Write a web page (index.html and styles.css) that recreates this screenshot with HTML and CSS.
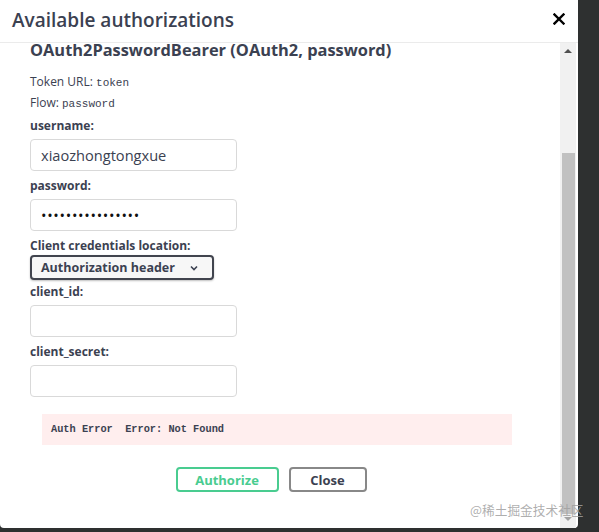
FILE: index.html
```html
<!DOCTYPE html>
<html lang="en">
<head>
    <meta charset="UTF-8">
    <meta name="viewport" content="width=device-width, initial-scale=1.0">
    <title>Available authorizations</title>
    <link rel="stylesheet" href="styles.css">
</head>
<body>
    <div class="modal">
        <div class="modal-header">
            <h3>Available authorizations</h3>
            <button class="close-x" aria-label="Close">
                <svg width="12" height="12" viewBox="0 0 12 12"><path d="M1.5 1.5 L10.5 10.5 M10.5 1.5 L1.5 10.5" stroke="#000" stroke-width="2.4" stroke-linecap="square"/></svg>
            </button>
        </div>
        <div class="modal-body">
            <div class="auth-content">
                <h4>OAuth2PasswordBearer (OAuth2, password)</h4>
                <p class="flow-info">Token URL: <code>token</code></p>
                <p class="flow-info">Flow: <code>password</code></p>

                <label for="username" class="first-label">username:</label>
                <input type="text" id="username" value="xiaozhongtongxue">

                <label for="password">password:</label>
                <input type="password" id="password" value="xiaozhongtongxue">

                <label class="loc-label">Client credentials location:</label>
                <div class="select-box">
                    <span>Authorization header</span>
                    <svg width="8" height="6" viewBox="0 0 8 6"><path d="M1 1.5 L4 4.5 L7 1.5" fill="none" stroke="#3b4151" stroke-width="1.6"/></svg>
                </div>

                <label for="client_id">client_id:</label>
                <input type="text" id="client_id">

                <label for="client_secret">client_secret:</label>
                <input type="text" id="client_secret">

                <div class="errors">Auth Error&nbsp; Error: Not Found</div>

                <div class="btn-row">
                    <button class="btn authorize">Authorize</button>
                    <button class="btn btn-close">Close</button>
                </div>
            </div>
            <!-- fake scrollbar, content is scrolled a bit -->
            <div class="scrollbar">
                <span class="arrow up"></span>
                <div class="thumb"></div>
                <span class="arrow down"></span>
            </div>
        </div>
    </div>
    <div class="watermark">@稀土掘金技术社区</div>
</body>
</html>
```

FILE: styles.css
```css
body {
    margin: 0;
    height: 532px;
    overflow: hidden;
    background-color: #2e3030;
    font-family: "Open Sans", sans-serif;
    color: #3b4151;
}
.modal {
    width: 578px;
    height: 528px;
    background-color: white;
    border-radius: 0 0 4px 4px;
    display: flex;
    flex-direction: column;
}
.modal-header {
    height: 42px;
    border-bottom: 1px solid #ebebeb;
    display: flex;
    align-items: center;
    justify-content: space-between;
    padding: 0 13px 0 12px;
    flex-shrink: 0;
}
.modal-header h3 {
    margin: 0;
    font-size: 19px;
    font-weight: 600;
    color: #3b4151;
    position: relative;
    top: -1px;
}
.close-x {
    border: none;
    background: none;
    padding: 0;
    width: 12px;
    height: 12px;
    display: flex;
    position: relative;
    top: -2px;
}
.modal-body {
    flex: 1;
    display: flex;
    min-height: 0;
}
.auth-content {
    width: 482px;
    padding-left: 30px;
    flex-shrink: 0;
}
.auth-content h4 {
    margin: -3px 0 0;
    font-size: 16.4px;
    line-height: 20px;
    font-weight: 700;
}
.flow-info {
    margin: 0;
    height: 21px;
    font-size: 12px;
    line-height: 21px;
}
.flow-info:first-of-type {
    margin-top: 11px;
}
.flow-info code {
    font-family: "Liberation Mono", monospace;
    font-size: 11px;
    line-height: 1;
}
label {
    display: block;
    font-size: 12px;
    font-weight: 700;
    line-height: 16px;
    margin-bottom: 5px;
}
.first-label {
    margin-top: 5px;
}
input {
    display: block;
    box-sizing: border-box;
    width: 207px;
    height: 32px;
    margin: 0 0 7px;
    padding: 0 10px;
    border: 1px solid #d9d9d9;
    border-radius: 4px;
    font-family: "Open Sans", sans-serif;
    font-size: 14.6px;
    color: #3b4151;
}
input[type="password"] {
    letter-spacing: 0.7px;
    color: #111;
}
.loc-label {
    margin-bottom: 1px;
}
.select-box {
    box-sizing: border-box;
    width: 184px;
    height: 25px;
    border: 2px solid #41444e;
    border-radius: 4px;
    background-color: #f7f7f7;
    box-shadow: 0 1px 2px rgba(0, 0, 0, 0.25);
    display: flex;
    align-items: center;
    justify-content: space-between;
    padding: 0 14px 0 9px;
    font-size: 12.5px;
    font-weight: 700;
    margin-bottom: 4px;
}
.errors {
    margin: 17px 0 0 12px;
    width: 470px;
    height: 31px;
    box-sizing: border-box;
    padding-left: 9px;
    background-color: #ffeeee;
    font-family: "Liberation Mono", monospace;
    font-size: 10.3px;
    font-weight: 700;
    line-height: 31px;
    color: #3b4151;
}
.btn-row {
    display: flex;
    justify-content: center;
    gap: 10px;
    margin-top: 22px;
}
.btn {
    box-sizing: border-box;
    height: 25px;
    border: 2px solid #888;
    border-radius: 4px;
    background: white;
    font-family: "Open Sans", sans-serif;
    font-size: 13px;
    font-weight: 700;
    color: #3b4151;
    cursor: pointer;
}
.authorize {
    width: 103px;
    border-color: #49cc90;
    color: #49cc90;
}
.btn-close {
    width: 78px;
}
.scrollbar {
    margin-left: auto;
    margin-right: 2px;
    width: 16px;
    background-color: #f1f1f1;
    display: flex;
    flex-direction: column;
    align-items: center;
}
.arrow {
    width: 0;
    height: 0;
    border-left: 4px solid transparent;
    border-right: 4px solid transparent;
}
.arrow.up {
    margin-top: 6px;
    border-bottom: 4px solid #505050;
}
.thumb {
    width: 13px;
    height: 361px;
    margin-top: 100px;
    background-color: #c1c1c1;
}
.arrow.down {
    margin-top: 3px;
    border-top: 4px solid #a3a3a3;
}
.watermark {
    position: absolute;
    left: 470px;
    top: 500px;
    font-family: "Noto Sans CJK SC", sans-serif;
    font-size: 12.7px;
    color: rgba(160, 160, 160, 0.85);
}
```
